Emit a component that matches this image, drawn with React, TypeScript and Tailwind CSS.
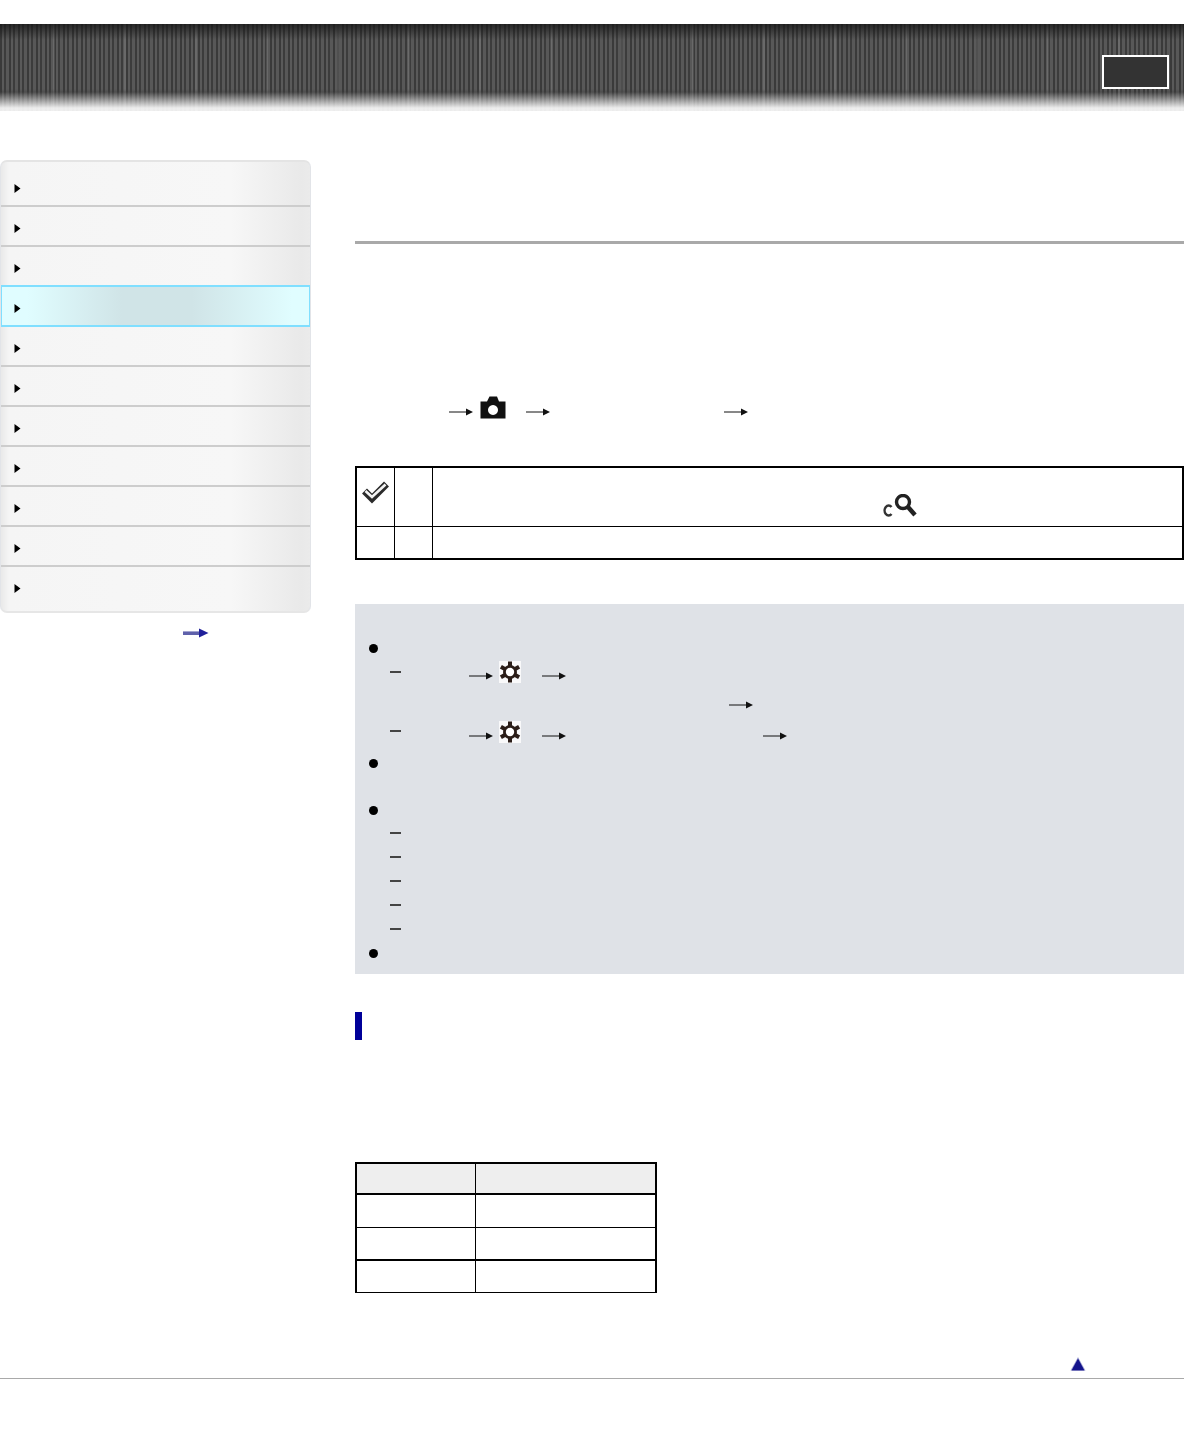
import type { ReactNode } from "react";

const NAV_ITEMS = [0, 1, 2, 3, 4, 5, 6, 7, 8, 9, 10];
const ACTIVE_ITEM = 3;

function NavArrow() {
  return (
    <svg width="7" height="9" viewBox="0 0 7 9" className="shrink-0">
      <path d="M0.5 0 L6.5 4.5 L0.5 9 Z" fill="#000" />
    </svg>
  );
}

function ThinArrow({ className = "" }: { className?: string }) {
  return (
    <svg width="24" height="8" viewBox="0 0 24 8" className={`shrink-0 ${className}`}>
      <path d="M0 4 H18" stroke="#111" strokeWidth="1" />
      <path d="M17 0.5 L24 4 L17 7.5 Z" fill="#111" />
    </svg>
  );
}

function CameraIcon() {
  return (
    <svg width="26" height="23" viewBox="0 0 26 23" className="shrink-0">
      <path
        fillRule="evenodd"
        d="M0.5 5.5 H7 L9.5 0.5 H17 L19 5.5 H25.5 V22.5 H0.5 Z M13 9 a5 5 0 1 0 0.01 0 Z"
        fill="#111"
      />
    </svg>
  );
}

function GearIcon() {
  return (
    <svg width="22" height="22" viewBox="0 0 22 22" className="shrink-0 bg-white/80">
      <g stroke="#2a1d18" strokeWidth="4">
        <path d="M11 0.5 V21.5" />
        <path d="M1.9 5.75 L20.1 16.25" />
        <path d="M1.9 16.25 L20.1 5.75" />
      </g>
      <circle cx="11" cy="11" r="7" fill="#2a1d18" />
      <circle cx="11" cy="11" r="4.2" fill="#fff" />
    </svg>
  );
}

function CheckIcon() {
  return (
    <svg width="27" height="24" viewBox="0 0 27 24">
      <path
        d="M2.5 11 L10 18.5 L24.5 4"
        fill="none"
        stroke="#2b2b2b"
        strokeWidth="7"
        strokeLinejoin="miter"
      />
      <path
        d="M3.5 11 L10 17 L23.5 4.5"
        fill="none"
        stroke="#f4f4f4"
        strokeWidth="2.6"
        strokeLinejoin="miter"
      />
    </svg>
  );
}

function SearchCIcon() {
  return (
    <svg width="34" height="24" viewBox="0 0 34 24" className="shrink-0">
      <path d="M8.5 13 A4 5 0 1 0 8.5 20" fill="none" stroke="#333" strokeWidth="2.5" />
      <circle cx="20" cy="8" r="6.5" fill="none" stroke="#222" strokeWidth="3.4" />
      <path d="M25 13 L32 21" stroke="#222" strokeWidth="4.5" />
    </svg>
  );
}

function Bullet({ className = "" }: { className?: string }) {
  return <span className={`block w-[9px] h-[9px] rounded-full bg-black shrink-0 ${className}`} />;
}

function Dash({ className = "" }: { className?: string }) {
  return <span className={`block w-[11px] h-[2px] bg-[#444] shrink-0 ${className}`} />;
}

// one row of the note box, height is the line box from the original text
function NoteRow({ h, pl, children }: { h: string; pl: string; children: ReactNode }) {
  return <div className={`flex items-center ${h} ${pl}`}>{children}</div>;
}

function navRowClass(item: number) {
  if (item === ACTIVE_ITEM)
    return "h-[42px] -mx-px pl-[12px] pt-[17px] border-2 border-[#80dfff] bg-[linear-gradient(to_right,#e0fdff_0px,#e0fdff_25px,#d0e4e7_120px,#d0e4e7_190px,#e0fdff_290px,#e0fdff_311px)]";
  if (item === 0) return "h-[45px] pl-[13px] pt-[22px] border-b-2 border-b-[#cdcdcd]";
  if (item === ACTIVE_ITEM - 1) return "h-[38px] pl-[13px] pt-[17px]";
  if (item === NAV_ITEMS.length - 1) return "h-[44px] pl-[13px] pt-[17px]";
  return "h-[40px] pl-[13px] pt-[17px] border-b-2 border-b-[#cdcdcd]";
}

function Sidebar() {
  return (
    <aside className="w-[311px] shrink-0">
      <nav className="rounded-[7px] border-t-2 border-x border-b-2 border-t-[#e4e4e4] border-x-[#e2e4e8] border-b-[#e6e6e6] overflow-hidden bg-[linear-gradient(to_right,#e9e9e9_0px,#f5f5f5_8px,#f7f7f7_230px,#e9e9e9_300px,#ebebeb_311px)]">
        {NAV_ITEMS.map((item) => (
          <div key={item} className={`flex items-start ${navRowClass(item)}`}>
            <NavArrow />
          </div>
        ))}
      </nav>
      <div className="flex pl-[183px] mt-[15px]">
        <svg width="26" height="10" viewBox="0 0 26 10">
          <path d="M0 3 H18 V7 H0 Z" fill="#5f61ab" />
          <path d="M0 3.5 H18" stroke="#a3a4d0" strokeWidth="1" />
          <path d="M16 0.5 L25.5 5 L16 9.5 Z" fill="#20209a" />
        </svg>
      </div>
    </aside>
  );
}

function SettingsTable() {
  return (
    <div className="mt-[44px] border-2 border-black">
      <div className="flex h-[59px] border-b border-black">
        <div className="w-[38px] border-r border-black pt-[12px] pl-[5px]">
          <CheckIcon />
        </div>
        <div className="w-[38px] border-r border-black" />
        <div className="flex-1 flex pl-[450px] pt-[26px]">
          <SearchCIcon />
        </div>
      </div>
      <div className="flex h-[31px]">
        <div className="w-[38px] border-r border-black" />
        <div className="w-[38px] border-r border-black" />
        <div className="flex-1" />
      </div>
    </div>
  );
}

function NoteBox() {
  return (
    <div className="mt-[44px] h-[370px] bg-[#dfe2e7] pt-[33px]">
      <NoteRow h="h-[24px]" pl="pl-[14px]">
        <Bullet className="-mt-[1px]" />
      </NoteRow>
      <NoteRow h="h-[33px]" pl="pl-[35px]">
        <Dash className="-mt-[12px]" />
        <ThinArrow className="ml-[68px] -mt-[3px]" />
        <span className="ml-[6px] -mt-[12px]">
          <GearIcon />
        </span>
        <ThinArrow className="ml-[21px] -mt-[3px]" />
      </NoteRow>
      <NoteRow h="h-[26px]" pl="pl-[374px]">
        <ThinArrow className="-mt-[4px]" />
      </NoteRow>
      <NoteRow h="h-[28px]" pl="pl-[35px]">
        <Dash className="-mt-[6px]" />
        <ThinArrow className="ml-[68px] mt-[4px]" />
        <span className="ml-[6px] -mt-[4px]">
          <GearIcon />
        </span>
        <ThinArrow className="ml-[21px] mt-[4px]" />
        <ThinArrow className="ml-[197px] mt-[4px]" />
      </NoteRow>
      <NoteRow h="h-[30px]" pl="pl-[14px]">
        <Bullet />
      </NoteRow>
      <NoteRow h="h-[43px]" pl="pl-[14px]">
        <Bullet className="mt-[21px]" />
      </NoteRow>
      {[0, 1, 2, 3, 4].map((i) => (
        <NoteRow key={i} h="h-[24px]" pl="pl-[35px]">
          <Dash />
        </NoteRow>
      ))}
      <NoteRow h="h-[24px]" pl="pl-[14px]">
        <Bullet />
      </NoteRow>
    </div>
  );
}

function ValueTable() {
  return (
    <div className="mt-[122px] w-[302px] border-2 border-b border-black">
      <div className="flex h-[31px] bg-[#eeeeee] border-b-2 border-black">
        <div className="w-[119px] border-r border-black" />
      </div>
      <div className="flex h-[33px] border-b border-black">
        <div className="w-[119px] border-r border-black" />
      </div>
      <div className="flex h-[33px] border-b-2 border-black">
        <div className="w-[119px] border-r border-black" />
      </div>
      <div className="flex h-[31px]">
        <div className="w-[119px] border-r border-black" />
      </div>
    </div>
  );
}

export default function App() {
  return (
    <div className="min-h-[1440px] bg-white pt-[24px]">
      <header className="h-[87px] flex justify-end relative bg-[linear-gradient(to_bottom,rgba(20,20,20,0.75)_0px,rgba(20,20,20,0)_16px,rgba(0,0,0,0)_65px,rgba(60,60,60,0.35)_68px,rgba(245,245,245,0.95)_84px,rgba(255,255,255,0.9)_87px),repeating-linear-gradient(to_right,transparent_0px,transparent_53px,rgba(255,255,255,0.1)_53px,rgba(255,255,255,0.1)_55px,transparent_55px,transparent_71px),repeating-linear-gradient(to_right,#3a3a3a_0px,#3a3a3a_2px,#5a5a5a_2px,#5a5a5a_4px,#3c3c3c_4px,#3c3c3c_6px,#585858_6px,#585858_9px)]">
        <div className="mt-[31px] mr-[15px] w-[67px] h-[34px] border-2 border-white bg-[#333333]" />
      </header>

      <div className="flex mt-[49px]">
        <Sidebar />
        <main className="flex-1 ml-[44px]">
          <div className="mt-[81px] h-[3px] bg-[#a9a9a9]" />

          <div className="flex items-center h-[24px] mt-[154px] pl-[94px]">
            <ThinArrow className="mt-[3px]" />
            <span className="ml-[7px] -mt-[6px]">
              <CameraIcon />
            </span>
            <ThinArrow className="ml-[20px] mt-[3px]" />
            <ThinArrow className="ml-[174px] mt-[3px]" />
          </div>

          <SettingsTable />
          <NoteBox />

          <div className="mt-[38px] w-[7px] h-[28px] bg-[#000099]" />

          <ValueTable />
        </main>
      </div>

      <footer className="mt-[64px]">
        <div className="flex justify-end pr-[98px]">
          <svg width="16" height="14" viewBox="0 0 16 14">
            <path d="M8 0 L15.5 13.5 H0.5 Z" fill="#a9abd6" />
            <path d="M8 1.5 L14.5 13.5 H1.5 Z" fill="#14148c" />
          </svg>
        </div>
        <div className="mt-[7px] h-px bg-[#a9a9a9]" />
      </footer>
    </div>
  );
}
